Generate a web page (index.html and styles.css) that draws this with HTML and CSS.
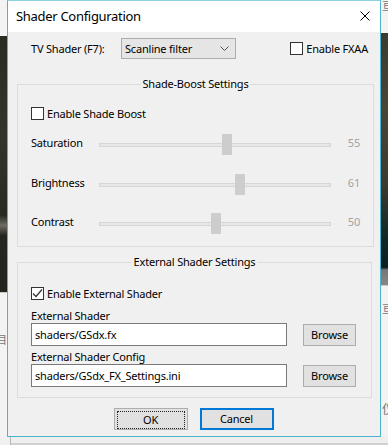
FILE: index.html
```html
<!DOCTYPE html>
<html lang="en">
<head>
  <meta charset="UTF-8">
  <title>Shader Configuration</title>
  <link rel="stylesheet" href="styles.css">
</head>
<body>

  <div class="desk-left">
    <div class="desk-light"></div>
    <div class="desk-photo"></div>
    <div class="desk-light lower"><span class="glyph">目</span></div>
  </div>

  <div class="window">
    <div class="titlebar">
      <span class="title">Shader Configuration</span>
      <svg class="close" width="10" height="10" viewBox="0 0 10 10">
        <path d="M0.5 0.5 L9.5 9.5 M9.5 0.5 L0.5 9.5" stroke="#000" stroke-width="1" fill="none"/>
      </svg>
    </div>

    <div class="content">
      <div class="top-row">
        <span class="tv-label">TV Shader (F7):</span>
        <div class="combo">
          <span>Scanline filter</span>
          <svg width="9" height="5" viewBox="0 0 9 5">
            <path d="M0.5 0.5 L4.5 4.5 L8.5 0.5" stroke="#555" stroke-width="1" fill="none"/>
          </svg>
        </div>
        <label class="check fxaa"><span class="box"></span>Enable FXAA</label>
      </div>

      <fieldset class="group boost">
        <legend>Shade-Boost Settings</legend>
        <label class="check"><span class="box"></span>Enable Shade Boost</label>

        <div class="slider-row first">
          <span class="slider-label">Saturation</span>
          <div class="track"><div class="thumb" style="left: 122px"></div></div>
          <span class="slider-value">55</span>
        </div>
        <div class="slider-row">
          <span class="slider-label">Brightness</span>
          <div class="track"><div class="thumb" style="left: 135px"></div></div>
          <span class="slider-value">61</span>
        </div>
        <div class="slider-row last">
          <span class="slider-label">Contrast</span>
          <div class="track"><div class="thumb" style="left: 111px"></div></div>
          <span class="slider-value">50</span>
        </div>
      </fieldset>

      <fieldset class="group external">
        <legend>External Shader Settings</legend>
        <label class="check"><span class="box checked">
          <svg width="11" height="11" viewBox="0 0 11 11">
            <path d="M1 5.5 L4 8.5 L10 1.5" stroke="#333" stroke-width="1.2" fill="none"/>
          </svg>
        </span>Enable External Shader</label>

        <div class="field-label first">External Shader</div>
        <div class="file-row">
          <input type="text" class="path" value="shaders/GSdx.fx" readonly>
          <button class="browse">Browse</button>
        </div>

        <div class="field-label">External Shader Config</div>
        <div class="file-row">
          <input type="text" class="path" value="shaders/GSdx_FX_Settings.ini" readonly>
          <button class="browse">Browse</button>
        </div>
      </fieldset>

      <div class="buttons">
        <button class="btn ok"><span>OK</span></button>
        <button class="btn cancel">Cancel</button>
      </div>
    </div>
  </div>

  <div class="desk-right">
    <div class="desk-light top"><span class="glyph">亘</span></div>
    <div class="desk-photo right"></div>
    <div class="desk-light lower"><span class="glyph">亘</span><span class="glyph low">仪</span></div>
  </div>

  <div class="desk-bottom"></div>

</body>
</html>
```

FILE: styles.css
```css
body {
  margin: 0;
  width: 388px;
  height: 445px;
  overflow: hidden;
  display: grid;
  grid-template-columns: 7px 374px 7px;
  grid-template-rows: 437px 8px;
  background: #f0f0f0;
  font-family: "Noto Sans", "Open Sans", sans-serif;
  font-size: 11px;
  letter-spacing: -0.2px;
  line-height: 14px;
  color: #000;
}

/* desktop behind the dialog */
.desk-left,
.desk-right {
  display: flex;
  flex-direction: column;
  overflow: hidden;
}

.desk-light {
  height: 36px;
  background: #f3f3f3;
}

.desk-light.top {
  height: 33px;
}

.desk-light.lower {
  flex: 1;
  border-top: 1px solid #c8c8c8;
}

.glyph {
  display: block;
  font-family: "Noto Sans CJK SC", sans-serif;
  font-size: 11px;
  color: #777;
  line-height: 12px;
}

.desk-left .glyph {
  margin-top: 40px;
  margin-left: -4px;
}

.desk-right .desk-light.top .glyph {
  margin-top: -1px;
  margin-left: 1px;
}

.desk-right .desk-light.lower .glyph {
  margin-top: 16px;
  margin-left: 1px;
}

.desk-right .desk-light.lower .glyph.low {
  margin-top: 88px;
  font-size: 13px;
}

.desk-photo {
  height: 256px;
  background: linear-gradient(180deg, #2b2b22 0%, #33342a 40%, #2a2a22 70%, #6e6c62 74%, #262620 78%, #24241e 100%);
}

.desk-photo.right {
  height: 252px;
  background: linear-gradient(180deg, #3a3a30 0%, #4a4636 30%, #3c3a2e 60%, #0e2826 82%, #0a2020 93%, #777 94%, #888 100%);
}

.desk-bottom {
  grid-column: 1 / 4;
  background: #eeeeee;
  border-left: 1px solid #b8b8b8;
  margin-left: 10px;
  box-shadow: inset 0 -2px 0 #d0d0d0;
}

/* dialog */
.window {
  border: 1px solid #4ab4cf;
  border-top-color: #8ccfe0;
  background: #f0f0f0;
  display: flex;
  flex-direction: column;
}

.titlebar {
  height: 31px;
  background: #fff;
  display: flex;
  align-items: center;
  justify-content: space-between;
  padding: 0 10px 0 8px;
}

.title {
  font-size: 13px;
  letter-spacing: -0.3px;
  margin-top: -1px;
}

.close {
  margin-top: -1px;
}

.content {
  padding: 0 8px 0 9px;
}

.top-row {
  display: flex;
  align-items: center;
  height: 21px;
  margin-top: 6px;
  padding-left: 14px;
}

.tv-label {
  width: 90px;
}

.combo {
  height: 19px;
  border: 1px solid #adadad;
  background: #e5e5e5;
  display: flex;
  align-items: center;
  justify-content: space-between;
  padding: 0 6px 0 3px;
  width: 104px;
}

.check {
  display: flex;
  align-items: center;
  height: 13px;
}

.box {
  width: 11px;
  height: 11px;
  border: 1px solid #333;
  background: #fff;
  margin-right: 3px;
  display: flex;
  align-items: center;
  justify-content: center;
}

.fxaa {
  margin-left: auto;
  margin-right: 4px;
}

/* group boxes */
.group {
  margin: 0;
  border: 1px solid #dcdcdc;
  padding: 0 13px;
}

.group legend {
  margin: 0 auto;
  padding: 0 2px;
  line-height: 16px;
}

.boost {
  margin-top: 17px;
  padding-top: 15px;
  padding-bottom: 12px;
}

.slider-row {
  display: flex;
  align-items: center;
  height: 21px;
  margin-top: 19px;
}

.slider-row.first {
  margin-top: 14px;
}

.slider-row.last {
  margin-top: 18px;
}

.slider-label {
  width: 68px;
  margin-bottom: 4px;
}

.track {
  position: relative;
  width: 230px;
  height: 2px;
  border: 1px solid #d6d6d6;
  background: #e7e7e7;
}

.thumb {
  position: absolute;
  top: -10px;
  width: 10px;
  height: 21px;
  background: #cdcdcd;
}

.slider-value {
  width: 29px;
  text-align: right;
  color: #a3a3a3;
  margin-bottom: 4px;
}

.external {
  margin-top: 7px;
  padding-top: 17px;
  padding-bottom: 10px;
}

.field-label {
  line-height: 14px;
  padding-top: 4px;
}

.field-label.first {
  padding-top: 9px;
}

.file-row {
  display: flex;
  align-items: center;
  height: 23px;
}

.path {
  width: 256px;
  height: 23px;
  box-sizing: border-box;
  border: 1px solid #7a7a7a;
  padding: 0 3px;
  margin: 0;
  font: inherit;
  letter-spacing: inherit;
  background: #fff;
  outline: none;
}

.browse {
  margin-left: 16px;
  width: 53px;
  height: 22px;
  border: 1px solid #adadad;
  background: #e1e1e1;
  font: inherit;
  letter-spacing: inherit;
  padding: 0;
}

.buttons {
  display: flex;
  justify-content: center;
  gap: 12px;
  margin-top: 10px;
  padding-right: 2px;
}

.btn {
  width: 74px;
  height: 22px;
  border: 1px solid #adadad;
  background: #e1e1e1;
  font: inherit;
  letter-spacing: inherit;
  padding: 0;
}

.btn.ok {
  padding: 2px;
}

.btn.ok span {
  display: flex;
  align-items: center;
  justify-content: center;
  height: 100%;
  border: 1px dotted #222;
}

.btn.cancel {
  border: 2px solid #0078d7;
}
```
